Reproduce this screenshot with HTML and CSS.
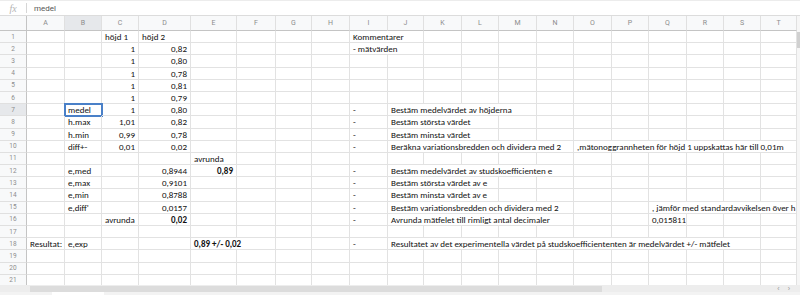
FILE: index.html
```html
<!DOCTYPE html>
<html lang="sv">
<head>
  <meta charset="UTF-8" />
  <title>Studskoefficient</title>
  <link rel="stylesheet" href="styles.css">
</head>
<body>

  <div class="formula">
    <span class="fx">fx</span>
    <span class="fx-sep"></span>
    <span class="fx-value">medel</span>
  </div>

  <div class="main">
    <div class="grid" id="grid"></div>
    <div class="vscroll">
      <div class="vthumb"></div>
    </div>
  </div>

  <div class="bottom">
    <div class="hscroll">
      <div class="hthumb"></div>
      <div class="harrows"><span>‹</span><span>›</span></div>
    </div>
    <div class="tabs">
      <div class="tab"></div>
    </div>
  </div>

  <script>
    const cols = 'ABCDEFGHIJKLMNOPQRST'.split('');

    // [text, flags, span]  flags: n = number (right aligned), b = bold
    const sheet = {
      1: { C: ['höjd 1'], D: ['höjd 2'], I: ['Kommentarer', '', 2] },
      2: { C: ['1', 'n'], D: ['0,82', 'n'], I: ['- mätvärden', '', 2] },
      3: { C: ['1', 'n'], D: ['0,80', 'n'] },
      4: { C: ['1', 'n'], D: ['0,78', 'n'] },
      5: { C: ['1', 'n'], D: ['0,81', 'n'] },
      6: { C: ['1', 'n'], D: ['0,79', 'n'] },
      7: { B: ['medel'], C: ['1', 'n'], D: ['0,80', 'n'], I: ['-'], J: ['Bestäm medelvärdet av höjderna', '', 4] },
      8: { B: ['h.max'], C: ['1,01', 'n'], D: ['0,82', 'n'], I: ['-'], J: ['Bestäm största värdet', '', 3] },
      9: { B: ['h.min'], C: ['0,99', 'n'], D: ['0,78', 'n'], I: ['-'], J: ['Bestäm minsta värdet', '', 3] },
      10: { B: ['diff+-'], C: ['0,01', 'n'], D: ['0,02', 'n'], I: ['-'], J: ['Beräkna variationsbredden och dividera med 2', '', 5],
            O: [',mätonoggrannheten för höjd 1 uppskattas här till 0,01m', '', 6] },
      11: { E: ['avrunda'] },
      12: { B: ['e,med'], D: ['0,8944', 'n'], E: ['0,89', 'nb'], I: ['-'], J: ['Bestäm medelvärdet av studskoefficienten e', '', 5] },
      13: { B: ['e,max'], D: ['0,9101', 'n'], I: ['-'], J: ['Bestäm största värdet av e', '', 3] },
      14: { B: ['e,min'], D: ['0,8788', 'n'], I: ['-'], J: ['Bestäm minsta värdet av e', '', 3] },
      15: { B: ['e,diff\''], D: ['0,0157', 'n'], I: ['-'], J: ['Bestäm variationsbredden och dividera med 2', '', 5],
            Q: [', jämför med standardavvikelsen över h', '', 4] },
      16: { C: ['avrunda'], D: ['0,02', 'nb'], I: ['-'], J: ['Avrunda mätfelet till rimligt antal decimaler', '', 5],
            Q: ['0,015811'] },
      18: { A: ['Resultat:'], B: ['e,exp'], E: ['0,89 +/- 0,02', 'b', 2], I: ['-'],
            J: ['Resultatet av det experimentella värdet på studskoefficiententen är medelvärdet +/- mätfelet', '', 10] }
    };

    const selected = { col: 'B', row: 7 };
    const grid = document.getElementById('grid');

    function cell(cls, text) {
      const el = document.createElement('div');
      el.className = cls;
      if (text) el.textContent = text;
      grid.appendChild(el);
      return el;
    }

    cell('corner');
    cols.forEach(c => cell('col-head' + (c === selected.col ? ' active' : ''), c));

    for (let r = 1; r <= 21; r++) {
      cell('row-head' + (r === selected.row ? ' active' : ''), String(r));
      const row = sheet[r] || {};
      for (let i = 0; i < cols.length; i++) {
        const c = cols[i];
        const data = row[c];
        if (!data) {
          cell('cell' + (c === selected.col && r === selected.row ? ' sel' : ''));
          continue;
        }
        const [text, flags = '', span = 1] = data;
        let cls = 'cell';
        if (flags.includes('n')) cls += ' num';
        if (flags.includes('b')) cls += ' bold';
        if (c === selected.col && r === selected.row) cls += ' sel';
        const el = cell(cls, text);
        if (span > 1) {
          el.style.gridColumn = 'span ' + span;
          i += span - 1;
        }
      }
    }
  </script>

</body>
</html>
```

FILE: styles.css
```css
body {
  margin: 0;
  width: 800px;
  height: 295px;
  overflow: hidden;
  background-color: #fff;
  font-family: Carlito, Lato, 'Noto Sans', sans-serif;
  color: #111;
}

/* Formula bar */
.formula {
  height: 16px;
  box-sizing: border-box;
  border-top: 1px solid #ececec;
  border-bottom: 1px solid #dcdcdc;
  display: flex;
  align-items: center;
}

.fx {
  width: 26px;
  text-align: center;
  font-family: 'Liberation Serif', serif;
  font-style: italic;
  font-size: 10px;
  color: #b4b4b4;
}

.fx-sep {
  width: 1px;
  height: 10px;
  background-color: #d6d6d6;
}

.fx-value {
  padding-left: 7px;
  font-family: Roboto, 'Liberation Sans', sans-serif;
  font-size: 8px;
  color: #555;
}

/* Sheet */
.main {
  display: flex;
  height: 269px;
}

.grid {
  flex: 1;
  overflow: hidden;
  display: grid;
  grid-template-columns: 27px 38px 37px 37px 52px 46px 39px 36px 38px 38px 36px 38px 37px 38px 37px 38px 37px 38px 37px 37px 36px;
  grid-template-rows: 15px repeat(21, 12.2px);
}

.corner,
.col-head,
.row-head {
  box-sizing: border-box;
  background-color: #f8f9fa;
  font-family: Roboto, 'Liberation Sans', sans-serif;
  font-size: 7px;
  color: #8c8c8c;
  display: flex;
  align-items: center;
  justify-content: center;
}

.corner {
  border-right: 1px solid #c4c4c4;
  border-bottom: 1px solid #c4c4c4;
}

.col-head {
  border-right: 1px solid #e0e0e0;
  border-bottom: 1px solid #c4c4c4;
}

.row-head {
  border-right: 1px solid #c4c4c4;
  border-bottom: 1px solid #e0e0e0;
  font-size: 6.5px;
}

.col-head.active,
.row-head.active {
  background-color: #e6e8eb;
}

.cell {
  box-sizing: border-box;
  border-right: 1px solid #e2e2e2;
  border-bottom: 1px solid #e2e2e2;
  padding: 0 2px 0 3px;
  font-size: 9px;
  line-height: 11.5px;
  white-space: nowrap;
  overflow: hidden;
  min-width: 0;
}

.cell.num {
  text-align: right;
  padding-right: 3px;
}

.cell.bold {
  font-weight: bold;
}

.cell.sel {
  outline: 2px solid #4a80c8;
  outline-offset: -1px;
}

/* Scrollbars */
.vscroll {
  width: 3px;
  background-color: #f6f6f6;
  padding-top: 16px;
}

.vthumb {
  height: 16px;
  background-color: #d0d0d0;
}

.bottom {
  height: 10px;
  display: flex;
  flex-direction: column;
}

.hscroll {
  height: 7px;
  display: flex;
  align-items: center;
  background-color: #ededed;
  padding-left: 30px;
}

.hthumb {
  width: 572px;
  height: 6px;
  background-color: #dcdcdc;
}

.harrows {
  margin-left: auto;
  display: flex;
  gap: 8px;
  padding-right: 10px;
  font-family: 'Liberation Sans', sans-serif;
  font-size: 7px;
  line-height: 7px;
  color: #999;
}

.tabs {
  height: 3px;
  background-color: #f3f3f3;
  display: flex;
}

.tab {
  margin-left: 52px;
  width: 52px;
  background-color: #fff;
}
```
